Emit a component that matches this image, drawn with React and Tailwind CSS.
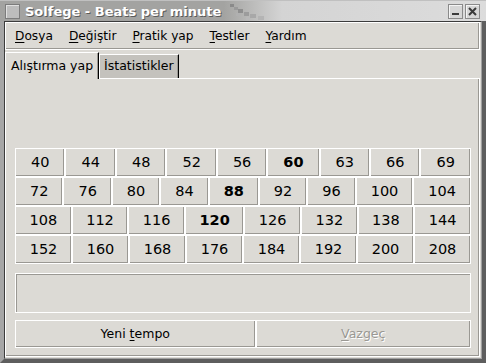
import React from "react";

const rows = [
  ["40", "44", "48", "52", "56", "60", "63", "66", "69"],
  ["72", "76", "80", "84", "88", "92", "96", "100", "104"],
  ["108", "112", "116", "120", "126", "132", "138", "144"],
  ["152", "160", "168", "176", "184", "192", "200", "208"],
];
const bold = new Set(["60", "88", "120"]);

function Mn({ first, rest }) {
  return (
    <span>
      <span className="underline underline-offset-[2px] decoration-1">{first}</span>
      {rest}
    </span>
  );
}

export default function App() {
  return (
    <div className="w-[486px] h-[363px] overflow-hidden flex flex-col bg-[#8a8a8a] font-['DejaVu_Sans','Liberation_Sans',sans-serif] text-black">
      {/* Title bar */}
      <div className="h-[21px] shrink-0 flex items-center bg-[linear-gradient(to_right,#a3a3a1_0%,#a3a3a1_46%,#d4d4d4_58%,#dcdcdc_100%)] border-t border-[#c0c0c0] relative">
        <div className="ml-[5px] w-[15px] h-[15px] border border-[#7c7c7c] bg-[#bdbdbd] shadow-[inset_1px_1px_0_#e0e0e0]" />
        <div className="ml-[5px] text-white font-bold text-[13px] leading-none [text-shadow:1px_1px_0_#5a5a5a]">
          Solfege - Beats per minute
        </div>
        <svg className="absolute left-[228px] top-[0px]" width="44" height="21" viewBox="0 0 44 21">
          <rect x="2" y="3" width="4" height="3" fill="#8a8a8a" />
          <rect x="6" y="6" width="4" height="3" fill="#9a9a9a" />
          <rect x="10" y="8" width="5" height="4" fill="#8e8e8e" />
          <rect x="16" y="11" width="5" height="4" fill="#9c9c9c" />
          <rect x="22" y="13" width="6" height="4" fill="#a8a8a8" />
          <rect x="30" y="15" width="6" height="4" fill="#b4b4b4" />
          <rect x="8" y="12" width="4" height="3" fill="#b0b0b0" />
          <rect x="18" y="16" width="4" height="3" fill="#b8b8b8" />
        </svg>
        <div className="ml-auto mr-[6px] flex gap-[2px]">
          <div className="w-[15px] h-[15px] border border-[#8a8a8a] bg-[#d6d6d6] shadow-[inset_1px_1px_0_#f4f4f4] flex items-end justify-center pb-[3px]">
            <div className="w-[7px] h-[2px] bg-[#3a3a3a]" />
          </div>
          <div className="w-[15px] h-[15px] border border-[#8a8a8a] bg-[#d6d6d6] shadow-[inset_1px_1px_0_#f4f4f4] flex items-center justify-center">
            <svg width="9" height="9" viewBox="0 0 9 9">
              <path d="M1 1 L8 8 M8 1 L1 8" stroke="#3a3a3a" strokeWidth="2" />
            </svg>
          </div>
        </div>
      </div>

      {/* Frame + client */}
      <div className="flex-1 flex flex-col border-l-[4px] border-l-[#a6a6a6] border-r-[4px] border-r-[#5e5e5e] border-b-[4px] border-b-[#5e5e5e]">
        <div className="flex-1 flex flex-col border-t border-l border-[#3c3c3c] border-r border-r-[#a0a0a0] border-b border-b-[#a0a0a0] bg-[#dcdad5]">
          <div className="flex-1 flex flex-col mr-[1px] mb-[1px]">
            {/* Menu bar */}
            <div className="h-[28px] shrink-0 flex items-center pl-[1px] border-t border-l border-white border-r border-b border-black shadow-[inset_-1px_-1px_0_#9a9893] text-[12.2px]">
              <div className="px-[8px]"><Mn first="D" rest="osya" /></div>
              <div className="px-[8px]"><Mn first="D" rest="eğiştir" /></div>
              <div className="px-[8px]"><Mn first="P" rest="ratik yap" /></div>
              <div className="px-[8px]"><Mn first="T" rest="estler" /></div>
              <div className="px-[8px]"><Mn first="Y" rest="ardım" /></div>
            </div>

            {/* Tabs */}
            <div className="h-[27px] shrink-0 flex items-end mt-[1px] text-[12.5px]">
              <div className="h-[27px] flex items-center pl-[5px] pr-[5px] border-t border-l border-white border-r border-r-black shadow-[inset_-1px_0_0_#9a9893] bg-[#dcdad5] relative top-[1px] z-10">
                Alıştırma yap
              </div>
              <div className="h-[24px] flex items-center pl-[4px] pr-[4px] border-t border-l border-white border-r border-r-black shadow-[inset_-1px_0_0_#9a9893] bg-[#c4c2bd]">
                İstatistikler
              </div>
              <div className="flex-1 h-[24px]" />
            </div>

            {/* Panel */}
            <div className="flex-1 flex flex-col border-t border-l border-white border-r border-b border-black shadow-[inset_-1px_-1px_0_#9a9893] pl-[9px] pr-[8px] pb-[7px]">
              <div className="h-[69px] shrink-0" />
              <div className="flex flex-col">
                {rows.map((row, i) => (
                  <div key={i} className="flex h-[29px]">
                    {row.map((n) => (
                      <div
                        key={n}
                        className={
                          "flex-auto flex items-center justify-center px-[6px] text-[14.5px] border-t border-l border-white border-r border-b border-black shadow-[inset_-1px_-1px_0_#9a9893] " +
                          (bold.has(n) ? "font-bold" : "")
                        }
                      >
                        {n}
                      </div>
                    ))}
                  </div>
                ))}
              </div>
              <div className="h-[40px] mt-[9px] border-t border-l border-black border-r border-b border-white shadow-[inset_1px_1px_0_#9a9893]" />
              <div className="flex h-[28px] mt-[7px] text-[12.5px]">
                <div className="flex-auto flex items-center justify-center px-[6px] border-t border-l border-white border-r border-b border-black shadow-[inset_-1px_-1px_0_#9a9893]">
                  <span>Yeni <span className="underline underline-offset-[2px] decoration-1">t</span>empo</span>
                </div>
                <div className="flex-auto flex items-center justify-center px-[6px] border-t border-l border-white border-r border-b border-black shadow-[inset_-1px_-1px_0_#9a9893] text-[#9a9893] [text-shadow:1px_1px_0_#ffffff]">
                  <span><span className="underline underline-offset-[2px] decoration-1">V</span>azgeç</span>
                </div>
              </div>
            </div>
          </div>
        </div>
      </div>
    </div>
  );
}
